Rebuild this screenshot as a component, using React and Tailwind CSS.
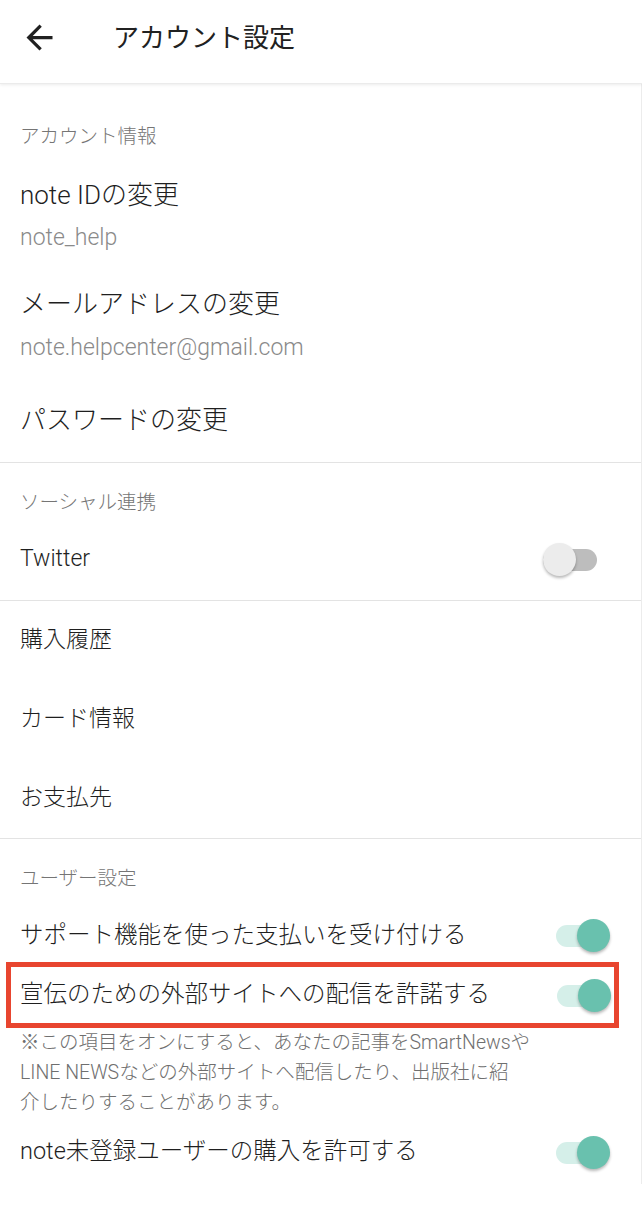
import React from 'react';

const font = { fontFamily: 'Roboto, "Noto Sans CJK JP", sans-serif' };

function Switch({ on }) {
    return (
        <div className="relative h-[33px] w-[54px] shrink-0">
            <div className={`absolute inset-x-0 top-[6px] h-[22px] rounded-full ${on ? 'bg-[#d5efe9]' : 'bg-[#bdbdbd]'}`} />
            <div
                className={`absolute top-0 h-[33px] w-[33px] rounded-full shadow-[0_2px_3px_rgba(0,0,0,0.28)] ${on ? 'right-0 bg-[#69c1ae]' : 'left-0 bg-[#ececec]'}`}
            />
        </div>
    );
}

function SectionLabel({ children }) {
    return <div className="flex h-[58px] items-center px-5 pt-[3px] text-[19.5px] text-[#757575]">{children}</div>;
}

function Divider() {
    return <div className="h-px bg-[#e3e3e3]" />;
}

export default function App() {
    return (
        <div className="min-h-[1212px] bg-white font-light text-[#1f1f1f]" style={font}>
            <header className="relative z-10 flex h-[84px] items-center border-b border-[#ebebeb] bg-white pb-[8px] shadow-[0_1px_3px_rgba(0,0,0,0.08)]">
                <svg viewBox="0 0 24 24" className="ml-[20px] h-[39px] w-[39px] fill-[#212121]">
                    <path d="M20 11H7.83l5.59-5.59L12 4l-8 8 8 8 1.41-1.41L7.83 13H20v-2z" />
                </svg>
                <h1 className="ml-[54px] text-[26px] font-normal leading-none text-[#212121]">アカウント設定</h1>
            </header>

            <div className="border-r border-[#ececec]">
                {/* アカウント情報 */}
                <section className="pt-[22px]">
                    <SectionLabel>アカウント情報</SectionLabel>
                    <div className="pb-[22px]">
                        <div className="flex h-[60px] items-center px-5 pt-[3px] text-[26px]">note IDの変更</div>
                        <div className="flex h-[28px] items-center px-5 text-[23px] text-[#8a8a8a]">note_help</div>
                    </div>
                    <div className="pb-[22px]">
                        <div className="flex h-[60px] items-center px-5 text-[26px]">メールアドレスの変更</div>
                        <div className="flex h-[28px] items-center px-5 text-[23px] text-[#8a8a8a]">note.helpcenter@gmail.com</div>
                    </div>
                    <div className="flex h-[72px] items-center px-5 text-[26px]">パスワードの変更</div>
                    <div className="h-[6px]" />
                </section>
                <Divider />

                {/* ソーシャル連携 */}
                <section className="pt-[9px] pb-[14px]">
                    <SectionLabel>ソーシャル連携</SectionLabel>
                    <div className="flex h-[56px] items-center justify-between pl-5 pr-[44px] pt-[3px]">
                        <span className="text-[23px]">Twitter</span>
                        <Switch on={false} />
                    </div>
                </section>
                <Divider />

                <section>
                    <div className="flex h-[79px] items-center px-5 text-[23px]">購入履歴</div>
                    <div className="flex h-[79px] items-center px-5 text-[23px]">カード情報</div>
                    <div className="flex h-[79px] items-center px-5 text-[23px]">お支払先</div>
                </section>
                <Divider />

                {/* ユーザー設定 */}
                <section className="pt-[9px]">
                    <SectionLabel>ユーザー設定</SectionLabel>
                    <div className="flex h-[56px] items-center justify-between pl-5 pr-[31px] pt-[3px]">
                        <span className="text-[23.5px]">サポート機能を使った支払いを受け付ける</span>
                        <Switch on />
                    </div>
                    <div className="ml-[6px] flex h-[66px] w-[613px] items-center justify-between border-[5px] border-[#e8452f] pl-[9px] pr-[3px]">
                        <span className="text-[23.5px]">宣伝のための外部サイトへの配信を許諾する</span>
                        <Switch on />
                    </div>
                    <p className="px-5 text-[19.5px] leading-[30px] text-[#6f6f6f]">
                        ※この項目をオンにすると、あなたの記事をSmartNewsや<br />
                        LINE NEWSなどの外部サイトへ配信したり、出版社に紹<br />
                        介したりすることがあります。
                    </p>
                    <div className="flex h-[66px] items-center justify-between pl-5 pr-[31px] pt-[2px]">
                        <span className="text-[23.5px]">note未登録ユーザーの購入を許可する</span>
                        <Switch on />
                    </div>
                </section>
            </div>
        </div>
    );
}
